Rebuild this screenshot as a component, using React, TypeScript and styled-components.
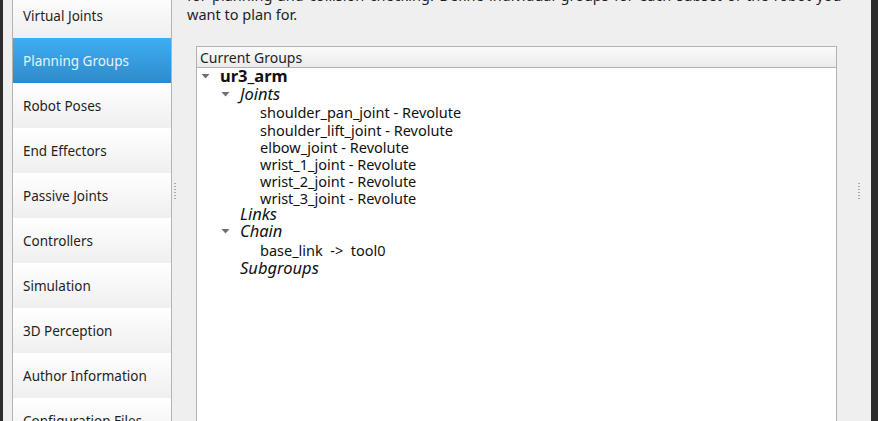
import styled, { createGlobalStyle } from "styled-components";

const GlobalStyle = createGlobalStyle`
  html, body {
    margin: 0;
    padding: 0;
    background: #efefef;
  }
  * {
    box-sizing: border-box;
  }
`;

const Window = styled.div`
  display: flex;
  width: 878px;
  height: 421px;
  overflow: hidden;
  background: #efefef;
  font-family: "Noto Sans", "Open Sans", sans-serif;
  color: #1f1f1f;
`;

const DarkEdge = styled.div<{ $width: number }>`
  flex: 0 0 ${(p) => p.$width}px;
  background: #2c2c2c;
`;

const Gutter = styled.div`
  flex: 0 0 9px;
`;

const Sidebar = styled.nav`
  flex: 0 0 160px;
  display: flex;
  flex-direction: column;
  border-left: 1px solid #b4b4b4;
  border-right: 1px solid #b4b4b4;
  background: #fafafa;
`;

const NavList = styled.div`
  margin-top: -7px;
  display: flex;
  flex-direction: column;
`;

const NavItem = styled.div<{ $active?: boolean }>`
  height: 45px;
  flex: 0 0 45px;
  display: flex;
  align-items: center;
  padding-left: 10px;
  font-size: 13.5px;
  white-space: nowrap;
  color: ${(p) => (p.$active ? "#e6f3fc" : "#1f1f1f")};
  background: ${(p) =>
    p.$active
      ? "linear-gradient(to bottom, #3eaef2, #2e8bcb)"
      : "linear-gradient(to bottom, #ffffff, #efefef)"};
`;

const Handle = styled.div`
  flex: 0 0 6px;
  display: flex;
  justify-content: center;
  padding-top: 183px;
`;

const Dots = styled.div`
  width: 2px;
  height: 17px;
  background: repeating-linear-gradient(
    to bottom,
    #a9a9a9 0,
    #a9a9a9 1px,
    transparent 1px,
    transparent 3px
  );
`;

const Content = styled.main`
  flex: 1;
  display: flex;
  flex-direction: column;
  padding: 0 19px 0 9px;
  min-width: 0;
`;

const Description = styled.p`
  margin: -14px 0 0;
  font-size: 14.5px;
  line-height: 19px;
  white-space: nowrap;
  word-spacing: 1.5px;
  color: #1f1f1f;
`;

const Tail = styled.span`
  word-spacing: 0;
`;

const GroupBox = styled.section`
  margin: 22px 0 0 9px;
  flex: 1;
  display: flex;
  flex-direction: column;
  background: #ffffff;
  border: 1px solid #b2b2b2;
  border-bottom: none;
`;

const BoxHeader = styled.div`
  height: 21px;
  flex: 0 0 21px;
  display: flex;
  align-items: center;
  padding-left: 3px;
  font-size: 14px;
  background: linear-gradient(to bottom, #fbfbfb, #ebebeb);
  border-bottom: 1px solid #b2b2b2;
`;

const Tree = styled.div`
  display: flex;
  flex-direction: column;
`;

const Row = styled.div<{ $depth: number; $height: number }>`
  display: flex;
  align-items: center;
  height: ${(p) => p.$height}px;
  padding-left: ${(p) => 4 + p.$depth * 20}px;
  white-space: pre;
`;

const Arrow = styled.span<{ $hidden?: boolean }>`
  flex: 0 0 19px;
  display: flex;
  align-items: center;
  visibility: ${(p) => (p.$hidden ? "hidden" : "visible")};
`;

const Label = styled.span<{ $kind: "group" | "section" | "leaf" }>`
  font-size: ${(p) => (p.$kind === "leaf" ? "14.5px" : "16.5px")};
  font-weight: ${(p) => (p.$kind === "group" ? 700 : 400)};
  font-style: ${(p) => (p.$kind === "section" ? "italic" : "normal")};
  line-height: 1;
  color: #111;
`;

const navItems = [
  "Virtual Joints",
  "Planning Groups",
  "Robot Poses",
  "End Effectors",
  "Passive Joints",
  "Controllers",
  "Simulation",
  "3D Perception",
  "Author Information",
  "Configuration Files",
];

type Node = {
  label: string;
  kind: "group" | "section" | "leaf";
  depth: number;
  open?: boolean;
  height: number;
};

const treeRows: Node[] = [
  { label: "ur3_arm", kind: "group", depth: 0, open: true, height: 17 },
  { label: "Joints", kind: "section", depth: 1, open: true, height: 18 },
  { label: "shoulder_pan_joint - Revolute", kind: "leaf", depth: 2, height: 19 },
  { label: "shoulder_lift_joint - Revolute", kind: "leaf", depth: 2, height: 17 },
  { label: "elbow_joint - Revolute", kind: "leaf", depth: 2, height: 17 },
  { label: "wrist_1_joint - Revolute", kind: "leaf", depth: 2, height: 17 },
  { label: "wrist_2_joint - Revolute", kind: "leaf", depth: 2, height: 17 },
  { label: "wrist_3_joint - Revolute", kind: "leaf", depth: 2, height: 17 },
  { label: "Links", kind: "section", depth: 1, height: 15 },
  { label: "Chain", kind: "section", depth: 1, open: true, height: 19 },
  { label: "base_link  ->  tool0", kind: "leaf", depth: 2, height: 18 },
  { label: "Subgroups", kind: "section", depth: 1, height: 18 },
];

const DownArrow = () => (
  <svg width="9" height="5" viewBox="0 0 9 5">
    <path d="M0.5 0 L8.5 0 L4.5 4.5 Z" fill="#707070" />
  </svg>
);

const App = () => {
  return (
    <>
      <GlobalStyle />
      <Window>
        <DarkEdge $width={3} />
        <Gutter />
        <Sidebar>
          <NavList>
            {navItems.map((item) => (
              <NavItem key={item} $active={item === "Planning Groups"}>
                {item}
              </NavItem>
            ))}
          </NavList>
        </Sidebar>
        <Handle>
          <Dots />
        </Handle>
        <Content>
          <Description>
            for planning and collision checking. Define individual groups for
            each subset of the robot you
            <br />
            <Tail>want to plan for.</Tail>
          </Description>
          <GroupBox>
            <BoxHeader>Current Groups</BoxHeader>
            <Tree>
              {treeRows.map((row) => (
                <Row key={row.label} $depth={row.depth} $height={row.height}>
                  <Arrow $hidden={!row.open}>
                    <DownArrow />
                  </Arrow>
                  <Label $kind={row.kind}>{row.label}</Label>
                </Row>
              ))}
            </Tree>
          </GroupBox>
        </Content>
        <Handle>
          <Dots />
        </Handle>
        <Gutter />
        <DarkEdge $width={7} />
      </Window>
    </>
  );
};

export default App;
